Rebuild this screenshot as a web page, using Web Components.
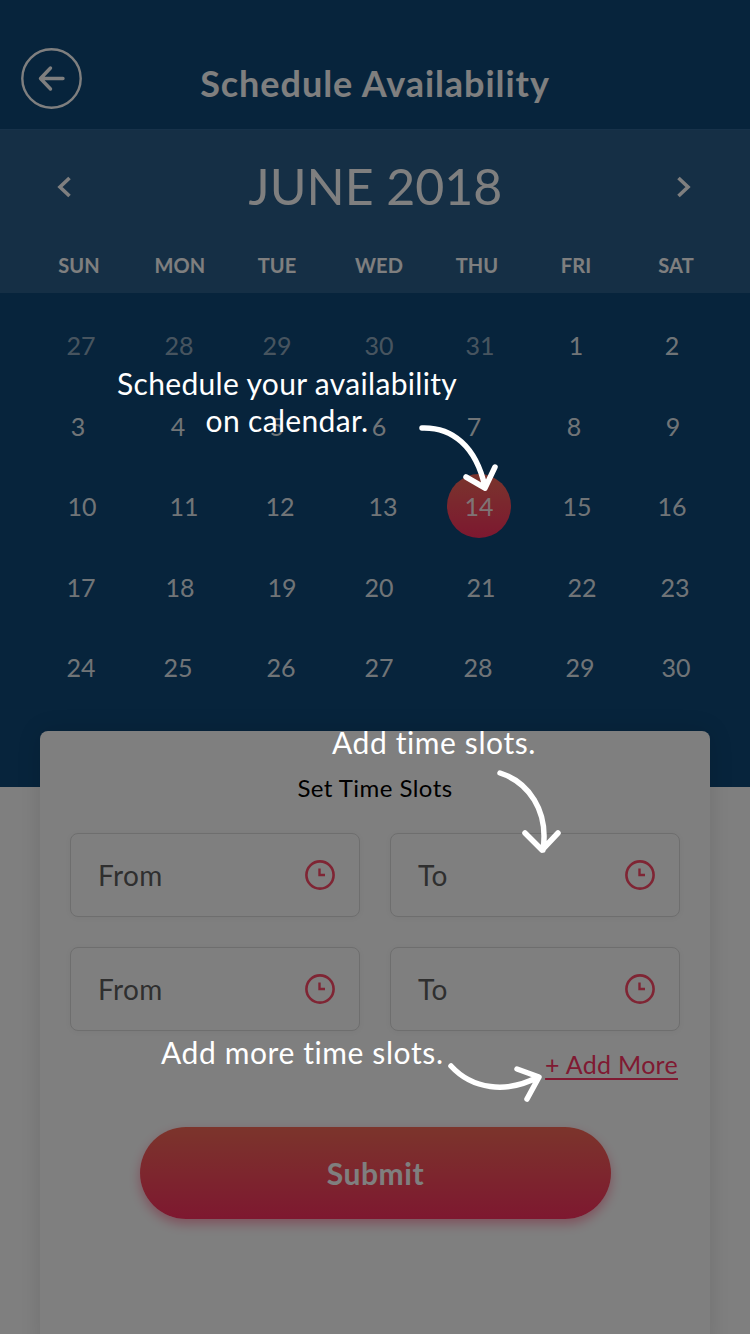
<!DOCTYPE html>
<html>
<head>
<meta charset="utf-8">
<title>Schedule Availability</title>
<style>
html, body { margin: 0; padding: 0; }
body { width: 750px; height: 1334px; overflow: hidden; position: relative; background: #fff; font-family: Lato, "Open Sans", sans-serif; }
</style>
</head>
<body>
<schedule-header>Schedule Availability</schedule-header>
<month-band month="JUNE 2018"></month-band>
<cal-grid></cal-grid>
<slot-card>
  <time-row>
    <time-field>From</time-field>
    <time-field>To</time-field>
  </time-row>
  <time-row>
    <time-field>From</time-field>
    <time-field>To</time-field>
  </time-row>
</slot-card>
<coach-overlay>
  <coach-note x="117" y="365" width="340" spacing="0.33">Schedule your availability<br>on calendar.</coach-note>
  <coach-note x="332" y="724">Add time slots.</coach-note>
  <coach-note x="161" y="1034">Add more time slots.</coach-note>
</coach-overlay>

<script>
const fontStack = 'Lato, "Open Sans", sans-serif';

// places cells at given centre x values, the mock isn't on a regular grid
function rowCells(centers, labels, cls) {
    let prev = null;
    return labels.map((label, i) => {
        const gap = prev === null ? centers[i] - 30 : centers[i] - prev - 60;
        prev = centers[i];
        return `<div class="${cls[i] || ''}" style="margin-left:${gap}px"><span>${label}</span></div>`;
    }).join('');
}

class ScheduleHeader extends HTMLElement {
    constructor() {
        super();
        this.attachShadow({ mode: 'open' }).innerHTML = `
<style>
:host {
    display: flex;
    align-items: center;
    height: 129px;
    background: #0e4878;
    color: #fff;
    font-family: ${fontStack};
    padding-top: 28px;
    box-sizing: border-box;
}
#back {
    width: 61px;
    height: 61px;
    margin: -1px 0 0 21px;
    flex: none;
}
#title {
    flex: 1;
    text-align: center;
    font-size: 36px;
    font-weight: 700;
    letter-spacing: 0.95px;
    margin: 9px 82px 0 0;
}
</style>
<svg id="back" viewBox="0 0 61 61" fill="none" stroke="#fff">
    <circle cx="30.5" cy="30.5" r="29.2" stroke-width="2.4"/>
    <path d="M42 30.5H20M29.5 20 19.5 30.5 29.5 41" stroke-width="3.4" stroke-linecap="round" stroke-linejoin="round"/>
</svg>
<div id="title"><slot></slot></div>`;
    }
}

class MonthBand extends HTMLElement {
    constructor() {
        super();
        const days = ['SUN', 'MON', 'TUE', 'WED', 'THU', 'FRI', 'SAT'];
        const xs = [79, 180, 277, 379, 477, 576, 676];
        this.attachShadow({ mode: 'open' }).innerHTML = `
<style>
:host {
    display: block;
    height: 164px;
    background: #2b5f8b;
    border-top: 1px solid #2f6594;
    box-sizing: border-box;
    color: #fff;
    font-family: ${fontStack};
}
#top {
    display: flex;
    align-items: center;
    justify-content: space-between;
    height: 114px;
    padding: 0 59px 0 57px;
}
#month {
    font-size: 50px;
    font-weight: 400;
    letter-spacing: 0;
    margin: -2px 0 0 3px;
}
svg { width: 15px; height: 22px; }
#days { display: flex; font-size: 20px; font-weight: 700; letter-spacing: 0.1px; margin-top: 9px; }
#days div { width: 60px; flex: none; text-align: center; }
</style>
<div id="top">
    <svg viewBox="0 0 15 22" fill="none" stroke="#fff" stroke-width="3.6"><path d="M12.5 2 3 11l9.5 9"/></svg>
    <div id="month">${this.getAttribute('month')}</div>
    <svg viewBox="0 0 15 22" fill="none" stroke="#fff" stroke-width="3.6"><path d="M2.5 2 12 11l-9.5 9"/></svg>
</div>
<div id="days">${rowCells(xs, days, [])}</div>`;
    }
}

class CalGrid extends HTMLElement {
    constructor() {
        super();
        const rows = [
            { xs: [81, 179, 277, 379, 480, 576, 672], days: [27, 28, 29, 30, 31, 1, 2], muted: 5 },
            { xs: [78, 178, 277, 379, 474, 574, 673], days: [3, 4, 5, 6, 7, 8, 9], muted: 0 },
            { xs: [82, 184, 280, 383, 479, 577, 672], days: [10, 11, 12, 13, 14, 15, 16], muted: 0 },
            { xs: [81, 180, 282, 379, 481, 582, 675], days: [17, 18, 19, 20, 21, 22, 23], muted: 0 },
            { xs: [81, 178, 281, 379, 478, 580, 676], days: [24, 25, 26, 27, 28, 29, 30], muted: 0 },
        ];
        const html = rows.map(r => {
            const cls = r.days.map((d, i) => i < r.muted ? 'muted' : (d === 14 ? 'sel' : ''));
            return `<section>${rowCells(r.xs, r.days, cls)}</section>`;
        }).join('');
        this.attachShadow({ mode: 'open' }).innerHTML = `
<style>
:host {
    display: block;
    height: 494px;
    box-sizing: border-box;
    padding-top: 12px;
    background: #0e4878;
    color: rgba(255,255,255,.9);
    font-family: ${fontStack};
    font-size: 25px;
}
section { display: flex; height: 80.5px; align-items: center; }
section div { width: 60px; flex: none; display: flex; align-items: center; justify-content: center; height: 64px; }
.muted { color: rgba(255,255,255,.55); }
.sel span {
    width: 64px;
    height: 64px;
    flex: none;
    border-radius: 50%;
    background: linear-gradient(#f46a5a, #fa3060);
    display: flex;
    align-items: center;
    justify-content: center;
}
</style>
${html}`;
    }
}

class SlotCard extends HTMLElement {
    constructor() {
        super();
        this.attachShadow({ mode: 'open' }).innerHTML = `
<style>
:host {
    display: block;
    width: 670px;
    height: 620px;
    margin: -56px 0 0 40px;
    box-sizing: border-box;
    padding: 42px 30px 0;
    background: #fff;
    border-radius: 8px 8px 0 0;
    box-shadow: 0 0 24px rgba(0,0,0,.12);
    font-family: ${fontStack};
    position: relative;
}
h2 {
    margin: 0;
    font-size: 24px;
    line-height: 30px;
    font-weight: 400;
    text-align: center;
    color: #000;
    letter-spacing: 0.45px;
}
#rows { display: flex; flex-direction: column; gap: 30px; margin-top: 30px; }
#more {
    display: block;
    text-align: right;
    margin: 17px 2px 0 0;
    font-size: 25px;
    line-height: 32px;
    color: #fe3464;
    text-decoration: underline;
    text-underline-offset: 4px;
    text-decoration-thickness: 1.5px;
    letter-spacing: 0.3px;
}
#submit {
    display: flex;
    align-items: center;
    justify-content: center;
    width: 471px;
    height: 92px;
    margin: 47px 0 0 70px;
    border-radius: 46px;
    background: linear-gradient(#f86a58, #fc3060);
    box-shadow: 0 5px 12px rgba(254,52,100,.45);
    color: #fff;
    font-size: 30px;
    font-weight: 700;
    letter-spacing: 0.6px;
}
</style>
<h2>Set Time Slots</h2>
<div id="rows"><slot></slot></div>
<div id="more">+ Add More</div>
<div id="submit">Submit</div>`;
    }
}

class TimeRow extends HTMLElement {
    constructor() {
        super();
        this.attachShadow({ mode: 'open' }).innerHTML = `
<style>
:host { display: flex; gap: 30px; }
</style>
<slot></slot>`;
    }
}

class TimeField extends HTMLElement {
    constructor() {
        super();
        this.attachShadow({ mode: 'open' }).innerHTML = `
<style>
:host {
    display: flex;
    align-items: center;
    justify-content: space-between;
    width: 290px;
    height: 84px;
    box-sizing: border-box;
    padding: 0 24.5px 0 27px;
    border: 1.5px solid #dcdcdc;
    border-radius: 8px;
    box-shadow: 0 1px 8px rgba(0,0,0,.05);
    background: #fff;
    color: #5f5f5f;
    font-size: 28px;
    letter-spacing: 0.4px;
}
svg { width: 30px; height: 30px; flex: none; }
</style>
<span><slot></slot></span>
<svg viewBox="0 0 30 30" fill="none" stroke="#fe4a68" stroke-width="2.6">
    <circle cx="15" cy="15" r="13.6"/>
    <path d="M14.5 8.5v6.5h5.5" stroke-width="2.4"/>
</svg>`;
    }
}

class CoachOverlay extends HTMLElement {
    constructor() {
        super();
        this.attachShadow({ mode: 'open' }).innerHTML = `
<style>
:host {
    position: absolute;
    inset: 0;
    background: rgba(0,0,0,.5);
    font-family: ${fontStack};
}
svg { position: absolute; left: 0; top: 0; }
</style>
<slot></slot>
<svg width="750" height="1334" fill="none" stroke="#fff" stroke-width="5.5" stroke-linecap="round" stroke-linejoin="round">
    <path d="M422 428C452 427 476 446 485 487M466 477 485 488 495 467"/>
    <path d="M500 773C528 782 549 810 543 850M525 833 542 850 558 833"/>
    <path d="M451 1066C472 1089 506 1094 538 1077M517 1069 539 1077 527 1099"/>
</svg>`;
    }
}

class CoachNote extends HTMLElement {
    constructor() {
        super();
        const w = this.getAttribute('width');
        this.attachShadow({ mode: 'open' }).innerHTML = `
<style>
:host {
    position: absolute;
    left: ${this.getAttribute('x')}px;
    top: ${this.getAttribute('y')}px;
    ${w ? `width: ${w}px; text-align: center;` : ''}
    color: #fff;
    font-size: 30px;
    line-height: 37px;
    letter-spacing: ${this.getAttribute('spacing') || 0.6}px;
    white-space: nowrap;
}
</style>
<slot></slot>`;
    }
}

customElements.define('schedule-header', ScheduleHeader);
customElements.define('month-band', MonthBand);
customElements.define('cal-grid', CalGrid);
customElements.define('slot-card', SlotCard);
customElements.define('time-row', TimeRow);
customElements.define('time-field', TimeField);
customElements.define('coach-overlay', CoachOverlay);
customElements.define('coach-note', CoachNote);
</script>
</body>
</html>
